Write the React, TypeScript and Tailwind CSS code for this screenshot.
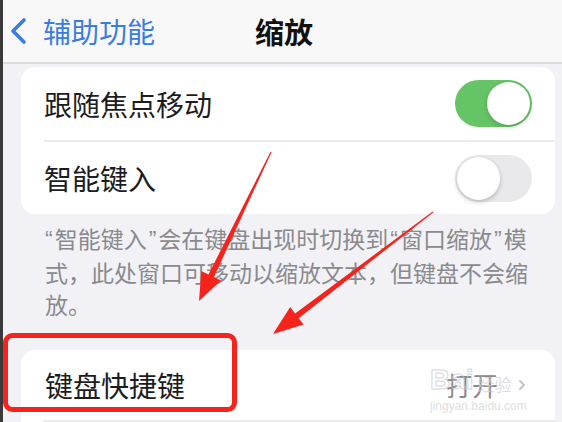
import { ChevronRight } from "lucide-react";

const Toggle = ({ on }: { on: boolean }) => {
  return (
    <div
      className={
        on
          ? "relative shrink-0 w-[77px] h-[47px] rounded-full bg-[#65c466]"
          : "relative shrink-0 w-[77px] h-[47px] rounded-full bg-[#e9e9eb]"
      }
    >
      <div
        className={
          on
            ? "absolute top-[2px] right-[2px] size-[43px] rounded-full bg-white shadow-[0_2px_5px_rgba(0,0,0,0.18)]"
            : "absolute top-[2px] left-[2px] size-[43px] rounded-full bg-white shadow-[0_2px_5px_rgba(0,0,0,0.22)]"
        }
      />
    </div>
  );
};

// narrow western quotes, as the reference draws them
const Q = ({ c }: { c: string }) => (
  <span className="mx-[2px] font-['Liberation_Sans',sans-serif]">{c}</span>
);

const Arrows = () => {
  return (
    <svg
      className="absolute inset-0 pointer-events-none"
      width="562"
      height="422"
      viewBox="0 0 562 422"
    >
      {/* arrow 1 */}
      <polygon
        points="271.5,152.2 213.9,277.1 221.1,280.6 199,301 201.3,271 208.5,274.5 270.5,151.8"
        fill="#f5231c"
      />
      {/* arrow 2 */}
      <polygon
        points="433.3,212.4 298.7,318.2 303.6,324.5 273,334 290.2,307.1 295.1,313.4 432.7,211.6"
        fill="#f5231c"
      />
      {/* highlight box */}
      <rect
        x="5.5"
        y="335.5"
        width="229"
        height="74"
        rx="7"
        fill="none"
        stroke="#f5231c"
        strokeWidth="5"
      />
    </svg>
  );
};

export default function App() {
  return (
    <div className="relative flex w-[562px] h-[422px] overflow-hidden bg-[#f2f2f6] font-['Noto_Sans_CJK_SC',sans-serif]">
      {/* left edge */}
      <div className="w-[3px] shrink-0 bg-[#3a3a3a]" />

      <div className="flex-1 min-w-0 flex flex-col">
        {/* Nav bar */}
        <div className="h-[64px] shrink-0 flex items-center bg-[#f8f8f8] border-b-2 border-[#dcdcdf]">
          <div className="flex items-center pl-[6px] gap-[16px] text-[#3b7ce0]">
            <svg width="18" height="28" viewBox="0 0 18 28">
              <path
                d="M15 3 L4 14 L15 25"
                fill="none"
                stroke="#3b7ce0"
                strokeWidth="3.6"
                strokeLinecap="round"
                strokeLinejoin="round"
              />
            </svg>
            <span className="text-[28px] leading-none">辅助功能</span>
          </div>
          <span className="ml-[100px] text-[29px] leading-none font-semibold text-[#111]">
            缩放
          </span>
        </div>

        {/* Card 1 */}
        <div className="ml-[18px] mr-[7px] mt-[3px] rounded-[14px] bg-white">
          <div className="h-[73px] flex items-center justify-between pl-[23px] pr-[23px]">
            <span className="text-[28px] leading-none text-[#1c1c1e]">跟随焦点移动</span>
            <Toggle on={true} />
          </div>
          <div className="ml-[23px] h-[2px] bg-[#ececee]" />
          <div className="h-[72px] flex items-center justify-between pl-[23px] pr-[23px]">
            <span className="text-[28px] leading-none text-[#1c1c1e]">智能键入</span>
            <Toggle on={false} />
          </div>
        </div>

        {/* Footer note */}
        <div className="pl-[42px] pt-[8px] text-[23px] leading-[32px] text-[#8a8a8e] whitespace-nowrap">
          <p className="-ml-[2px]">
            <Q c="“" />智能键入<Q c="”" />会在键盘出现时切换到<Q c="“" />窗口缩放<Q c="”" />模
          </p>
          <p>式，此处窗口可移动以缩放文本，但键盘不会缩</p>
          <p>放。</p>
        </div>

        {/* Card 2 */}
        <div className="ml-[18px] mr-[7px] mt-[30px] rounded-t-[14px] bg-white">
          <div className="h-[70px] flex items-center justify-between pl-[24px] pr-[25px]">
            <span className="text-[28px] leading-none text-[#1c1c1e]">键盘快捷键</span>
            <div className="flex items-center gap-[16px]">
              <span className="text-[26px] leading-none text-[#8a8a8e]">打开</span>
              <ChevronRight size={16} strokeWidth={3} className="text-[#c4c4c7]" />
            </div>
          </div>
          <div className="ml-[22px] h-[2px] bg-[#ececee]" />
        </div>
      </div>

      {/* watermark */}
      <div className="absolute left-[430px] top-[366px] flex flex-col items-start pointer-events-none opacity-70">
        <div className="flex items-end gap-[4px]">
          <span className="text-[28px] leading-none font-bold text-transparent [-webkit-text-stroke:1px_#c8c8cc] font-['Liberation_Sans',sans-serif]">
            Bai
          </span>
          <span className="text-[17px] leading-none text-[#cfcfd3] mb-[2px]">经验</span>
        </div>
        <span className="mt-[6px] text-[12px] leading-none text-[#d2d2d6] font-['Liberation_Sans',sans-serif]">
          jingyan.baidu.com
        </span>
      </div>

      <Arrows />
    </div>
  );
}
